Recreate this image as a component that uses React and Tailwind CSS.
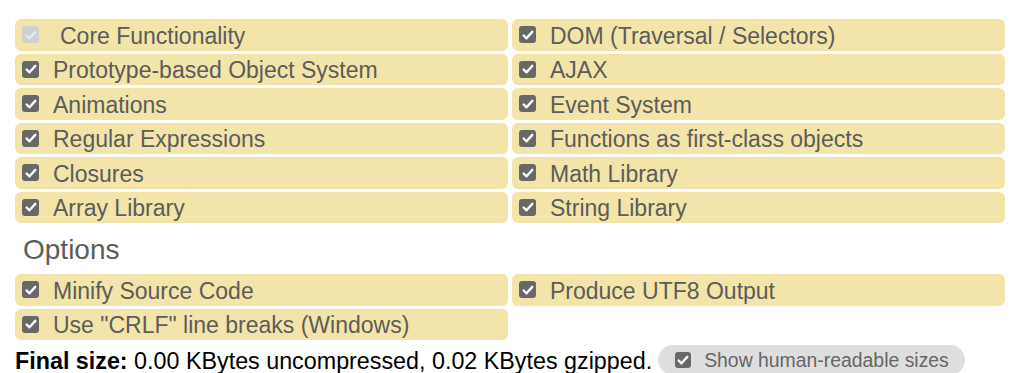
const features = [
  ["Core Functionality", true],
  ["DOM (Traversal / Selectors)"],
  ["Prototype-based Object System"],
  ["AJAX"],
  ["Animations"],
  ["Event System"],
  ["Regular Expressions"],
  ["Functions as first-class objects"],
  ["Closures"],
  ["Math Library"],
  ["Array Library"],
  ["String Library"],
];

const options = ["Minify Source Code", "Produce UTF8 Output", 'Use "CRLF" line breaks (Windows)'];

const Check = ({ disabled, size = "w-[17px] h-[17px]" }) => (
  <span
    className={`${size} shrink-0 rounded-[3px] flex items-center justify-center ${
      disabled ? "bg-[#d0d0d0]" : "bg-[#686868]"
    }`}
  >
    <svg viewBox="0 0 16 16" className="w-[14px] h-[14px]" fill="none">
      <path
        d="M3 8.6 L6.3 11.8 L12.9 4.4"
        stroke={disabled ? "#e9e9e9" : "#ffffff"}
        strokeWidth="2.7"
        strokeLinecap="round"
        strokeLinejoin="round"
      />
    </svg>
  </span>
);

const Row = ({ label, disabled }) => (
  <label className="h-[31.5px] rounded-[6px] bg-[#f3e4a9] flex items-center pl-[7px] text-[#5c5c5c] text-[23px] leading-none">
    <Check disabled={disabled} />
    <span className={`pt-[3px] ${disabled ? "ml-[21px]" : "ml-[14px]"}`}>{label}</span>
  </label>
);

export default function App() {
  return (
    <div className="w-[1024px] h-[373px] bg-white overflow-hidden font-['Liberation_Sans',Arial,sans-serif]">
      <div className="ml-[15px] w-[990px] pt-[19px]">
        <div className="grid grid-cols-2 gap-x-[4px] gap-y-[3px]">
          {features.map(([label, disabled]) => (
            <Row key={label} label={label} disabled={disabled} />
          ))}
        </div>

        <div className="h-[51px] flex items-center pl-[8px] pt-[3px] text-[28px] text-[#5c5c5c]">Options</div>

        <div className="grid grid-cols-2 gap-x-[4px] gap-y-[3px]">
          {options.map((label) => (
            <Row key={label} label={label} />
          ))}
        </div>

        <div className="mt-[5px] flex items-center h-[30px] text-[23.3px] text-black">
          <span className="pt-[2px]">
            <b>Final size:</b> 0.00 KBytes uncompressed, 0.02 KBytes gzipped.
          </span>
          <span className="ml-[6px] h-[30px] rounded-full bg-[#dedede] flex items-center pl-[17px] pr-[16px] text-[19.4px] text-[#666]">
            <Check size="w-[16px] h-[16px]" />
            <span className="ml-[13px] pt-[2px]">Show human-readable sizes</span>
          </span>
        </div>
      </div>
    </div>
  );
}
